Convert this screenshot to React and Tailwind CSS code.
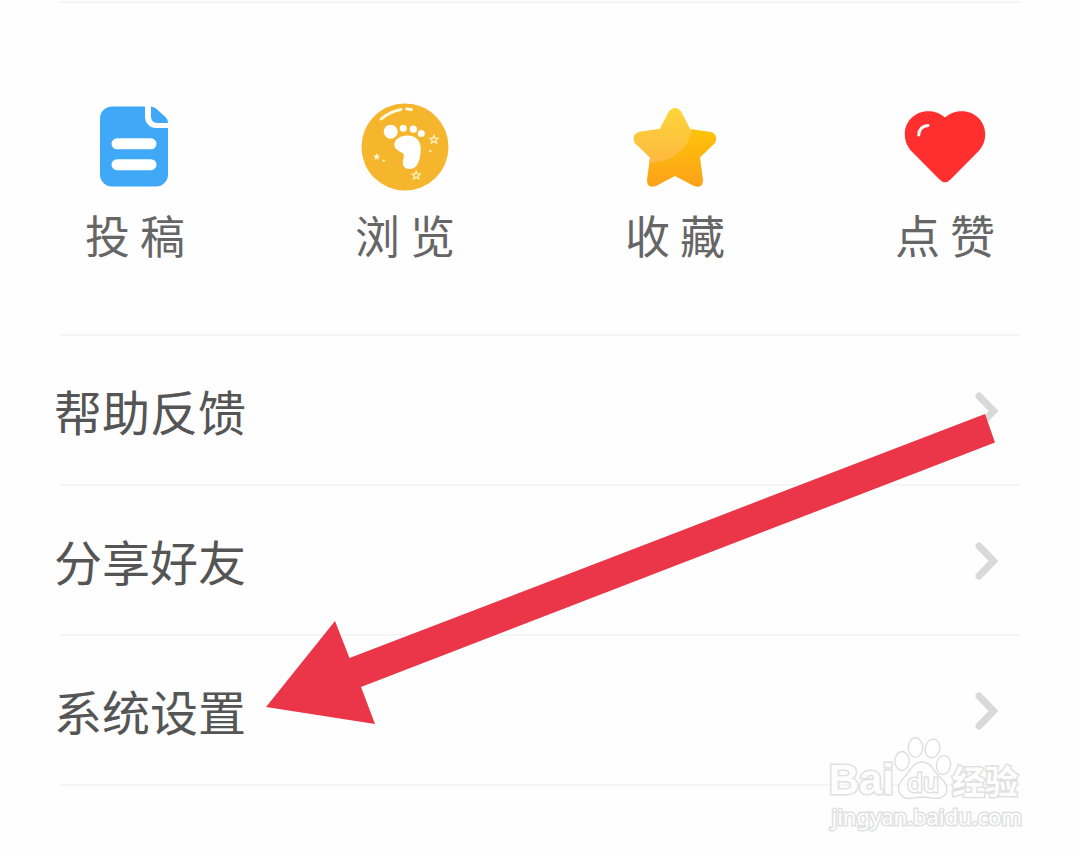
const FONT = "font-['Noto_Sans_CJK_SC',sans-serif]";

const STAR =
  "M38 8.5Q44 1.5 50 8.5L59 26L80 29Q88 32 84 40L69 54.5L72 77Q72 86 63 83L44 73L25 83Q16 86 16 77L19 54.5L4 40Q0 32 8 29L29 26Z";

function FileIcon() {
  return (
    <svg className="size-[88px]" viewBox="0 0 88 88" aria-hidden="true">
      <path
        d="M21 3.5H54V14A11 11 0 0 0 65 25H77V71.5A12 12 0 0 1 65 83.5H21A12 12 0 0 1 9 71.5V15.5A12 12 0 0 1 21 3.5Z"
        fill="#3fa8f7"
      />
      <path d="M60 3.5Q63 4 65 5.500L74.500 14Q77 16.500 77 20H66A6 6 0 0 1 60 14Z" fill="#3fa8f7" />
      <rect x="20.5" y="35.3" width="45" height="11" rx="5.5" fill="#fff" />
      <rect x="20.5" y="56.2" width="45" height="11" rx="5.5" fill="#fff" />
    </svg>
  );
}

function FootIcon() {
  const star = "M0 -4L1.1 -1.3L4 -1.2L1.8 .7L2.5 3.6L0 2L-2.5 3.6L-1.8 .7L-4 -1.2L-1.1 -1.3Z";
  return (
    <svg className="size-[88px]" viewBox="0 0 88 88" aria-hidden="true">
      <circle cx="44" cy="44" r="43.5" fill="#f5b52d" />
      <g fill="none" stroke="#fffbdc" strokeWidth="2.800" strokeLinecap="round">
        <path d="M20 16Q29 8.500 40 6.500" />
        <path d="M45.500 6L50.500 6.500" />
      </g>
      <g fill="#fff">
        <circle cx="29.700" cy="28.700" r="7" />
        <circle cx="42.300" cy="25.300" r="3.500" />
        <circle cx="52.300" cy="26.200" r="3.600" />
        <circle cx="60.300" cy="30.500" r="3.500" />
        <path d="M33.300 41C34 36 40 32.500 46 32.500C54 32.500 59.700 37 59.700 45C59.700 54 57.500 66 49 66C43.500 66 41 62.500 42 58C43 54 43.500 52 41.500 50C38.500 48 33 46.500 33.300 41Z" />
      </g>
      <g fill="none" stroke="#fff3c4" strokeWidth="1.300">
        <path d={star} transform="translate(73 36.500)" />
        <path d={star} transform="translate(55.200 72.200)" />
      </g>
      <g fill="#fff6d5">
        <path d={star} transform="translate(15.700 53.700) scale(.9)" />
        <path d={star} transform="translate(22.700 57.600) scale(.4)" />
        <path d={star} transform="translate(69.300 48) scale(.45)" />
      </g>
    </svg>
  );
}

function StarIcon() {
  return (
    <svg className="size-[88px]" viewBox="0 0 88 88" aria-hidden="true">
      <defs>
        <linearGradient id="star-base" x1="0" y1="0" x2="0" y2="1">
          <stop offset="0" stopColor="#ffd000" />
          <stop offset="1" stopColor="#fca11a" />
        </linearGradient>
        <linearGradient id="star-light" x1="0" y1="0" x2="0" y2="1">
          <stop offset="0.3" stopColor="#ffd83a" />
          <stop offset="1" stopColor="#fdb840" />
        </linearGradient>
        <clipPath id="star-clip">
          <path d={STAR} />
        </clipPath>
      </defs>
      <path d={STAR} fill="url(#star-base)" />
      <circle cx="20" cy="17.5" r="42.5" fill="url(#star-light)" clipPath="url(#star-clip)" />
    </svg>
  );
}

function HeartIcon() {
  return (
    <svg className="size-[88px]" viewBox="0 0 88 88" aria-hidden="true">
      <path
        d="M44 14.500C39 10 33 8.200 27 8.200C14 8.200 3.800 18.500 3.800 31C3.800 38.500 6.500 44 11 48.800L38.500 76.500Q44 82 49.500 76.500L77 48.800C81.500 44 84.200 38.500 84.200 31C84.200 18.500 74 8.200 61 8.200C55 8.200 49 10 44 14.500Z"
        fill="#ff2f2f"
      />
      <path d="M17.800 32C18 26.500 21.500 23 27 22.500" fill="none" stroke="#fff" strokeWidth="3" strokeLinecap="round" />
    </svg>
  );
}

function Chevron() {
  return (
    <svg className="h-10 w-6" viewBox="0 0 24 40" fill="none" aria-hidden="true">
      <path d="M5 6L19.500 21L5 36" stroke="#d9d9d9" strokeWidth="7" strokeLinecap="round" />
    </svg>
  );
}

function Watermark() {
  const outline = "text-[#fefefe] [-webkit-text-stroke:3px_#e0e0e0] [paint-order:stroke_fill]";
  return (
    <div className="absolute right-[58px] bottom-5 flex flex-col items-end" aria-label="Baidu 经验">
      <div className="flex items-end pr-1">
        <span className={`${outline} font-['Liberation_Sans',sans-serif] text-[42px] leading-10 font-bold`}>Bai</span>
        <div className="relative h-16 w-[58px]">
          <svg className="h-full w-full" viewBox="0 0 58 64" aria-hidden="true">
            <g fill="#fff" fillOpacity="0.6" stroke="#dcdcdc" strokeWidth="1.300">
              <ellipse cx="8" cy="25" rx="7.200" ry="9.500" />
              <ellipse cx="21.500" cy="11.500" rx="7.200" ry="9.800" />
              <ellipse cx="38.500" cy="12.500" rx="7.200" ry="9.500" transform="rotate(12 38.500 12.500)" />
              <ellipse cx="49.500" cy="29" rx="7" ry="9.500" transform="rotate(8 49.500 29)" />
              <path d="M28 26C35 26 38 31 42 37C47 43 53 46 53 53C53 59 48 62.500 42 62.500C37 62.500 33 61 28.500 61C24 61 20 62.500 15 62.500C9 62.500 4.500 58 4.500 52C4.500 46 9 43 13 38C17 32 21 26 28 26Z" />
            </g>
          </svg>
          <span className={`${outline} absolute inset-x-0 bottom-1 text-center font-['Noto_Sans',sans-serif] text-[26px] leading-7`}>
            du
          </span>
        </div>
        <span className={`${outline} ${FONT} text-[33px] leading-10 font-bold`}>经验</span>
      </div>
      <span className={`${outline} font-['Noto_Sans',sans-serif] text-[22px] leading-8`}>jingyan.baidu.com</span>
    </div>
  );
}

const shortcuts = [
  { label: "投 稿", Icon: FileIcon },
  { label: "浏 览", Icon: FootIcon },
  { label: "收 藏", Icon: StarIcon },
  { label: "点 赞", Icon: HeartIcon },
];

const rows = ["帮助反馈", "分享好友", "系统设置"];

export default function App() {
  return (
    <main className={`relative min-h-screen bg-[#fefefe] pt-px ${FONT}`}>
      <div className="mx-[60px] border-t-2 border-[#f5f5f5]" />

      <section className="grid grid-cols-4 pt-[100px] pb-[68px]">
        {shortcuts.map(({ label, Icon }) => (
          <button key={label} type="button" className="flex flex-col items-center gap-[13px] text-[#666]">
            <Icon />
            <span className="text-[45px] leading-[62px]">{label}</span>
          </button>
        ))}
      </section>

      <div className="mx-[60px] border-t-2 border-[#f5f5f5]" />

      <nav className="relative">
        {rows.map((row) => (
          <a key={row} href="#" className="block text-[#555]">
            <div className="flex h-[148px] items-center justify-between pr-[82px] pl-[54px]">
              <span className="text-5xl">{row}</span>
              <Chevron />
            </div>
            <div className="mx-[60px] border-t-2 border-[#f5f5f5]" />
          </a>
        ))}

        <svg className="pointer-events-none absolute inset-0 h-full w-full" viewBox="0 0 1080 450" aria-hidden="true">
          <path d="M266 371L335 285L349.500 322L985 78L995 106.500L361 351L375 388Z" fill="#ea3648" />
        </svg>
      </nav>

      <Watermark />
    </main>
  );
}
